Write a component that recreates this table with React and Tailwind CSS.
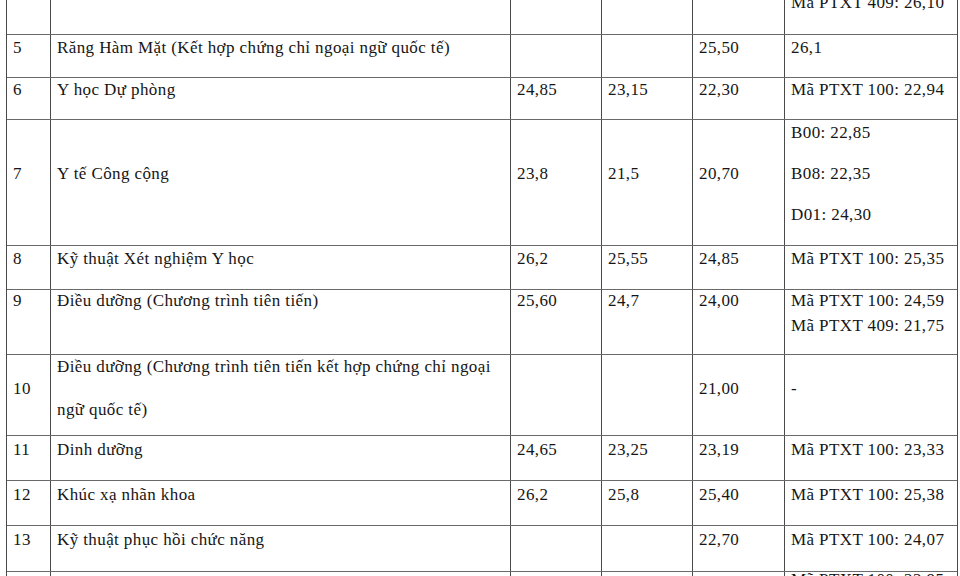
import React from "react";

const COLS = "grid grid-cols-[44px_460px_91px_91px_92px_173px]";

function Cell({ lines = [], last = false, align = "mid", pb = "pb-[17px]", gap = "gap-[16px]" }) {
  const base = `${last ? "" : "border-r"} border-[#4a4a4a] pl-[6px] overflow-hidden`;
  if (align === "top") {
    return (
      <div className={`${base} flex flex-col`}>
        <div className="-mt-[2px] flex flex-col">
          {lines.map((l, i) => (
            <div key={i} className="leading-[25px] whitespace-nowrap">{l}</div>
          ))}
        </div>
      </div>
    );
  }
  if (align === "crop-top") {
    return (
      <div className={`${base} flex flex-col`}>
        <div className="-mt-[10px] flex flex-col">
          {lines.map((l, i) => (
            <div key={i} className="leading-[26px] whitespace-nowrap">{l}</div>
          ))}
        </div>
      </div>
    );
  }
  if (align === "crop-bottom") {
    return (
      <div className={`${base} flex flex-col`}>
        <div className="-mt-[5px] flex flex-col">
          {lines.map((l, i) => (
            <div key={i} className="leading-[26px] whitespace-nowrap">{l}</div>
          ))}
        </div>
      </div>
    );
  }
  return (
    <div className={`${base} flex flex-col justify-center ${pb}`}>
      <div className={`flex flex-col ${gap}`}>
        {lines.map((l, i) => (
          <div key={i} className="leading-[26px] whitespace-nowrap">{l}</div>
        ))}
      </div>
    </div>
  );
}

function Row({ h, cells, align = "mid", pb, gap, noBorder = false }) {
  return (
    <div className={`${COLS} ${h} ${noBorder ? "" : "border-b"} border-[#6a6a6a]`}>
      {cells.map((c, i) => (
        <Cell
          key={i}
          lines={Array.isArray(c) ? c : c === "" ? [] : [c]}
          last={i === cells.length - 1}
          align={align}
          pb={pb}
          gap={gap}
        />
      ))}
    </div>
  );
}

export default function App() {
  return (
    <div
      className="w-[960px] h-[576px] overflow-hidden bg-white text-[#161616] text-[17px] tracking-[0.4px]"
      style={{ fontFamily: '"Liberation Serif", "Times New Roman", serif' }}
    >
      <div className="ml-[6px] w-[952px] border-l border-r border-[#4a4a4a]">
        <Row h="h-[35px]" align="crop-top" cells={["", "", "", "", "", "Mã PTXT 409: 26,10"]} />
        <Row
          h="h-[43px]"
          cells={["5", "Răng Hàm Mặt (Kết hợp chứng chỉ ngoại ngữ quốc tế)", "", "", "25,50", "26,1"]}
        />
        <Row h="h-[42px]" cells={["6", "Y học Dự phòng", "24,85", "23,15", "22,30", "Mã PTXT 100: 22,94"]} />
        <Row
          h="h-[126px]"
          gap="gap-[15px]"
          cells={["7", "Y tế Công cộng", "23,8", "21,5", "20,70", ["B00: 22,85", "B08: 22,35", "D01: 24,30"]]}
        />
        <Row
          h="h-[44px]"
          cells={["8", "Kỹ thuật Xét nghiệm Y học", "26,2", "25,55", "24,85", "Mã PTXT 100: 25,35"]}
        />
        <Row
          h="h-[65px]"
          align="top"
          cells={[
            "9",
            "Điều dưỡng (Chương trình tiên tiến)",
            "25,60",
            "24,7",
            "24,00",
            ["Mã PTXT 100: 24,59", "Mã PTXT 409: 21,75"],
          ]}
        />
        <Row
          h="h-[81px]"
          pb="pb-[13px]"
          gap="gap-[17px]"
          cells={[
            "10",
            ["Điều dưỡng (Chương trình tiên tiến kết hợp chứng chỉ ngoại", "ngữ quốc tế)"],
            "",
            "",
            "21,00",
            "-",
          ]}
        />
        <Row h="h-[45px]" cells={["11", "Dinh dưỡng", "24,65", "23,25", "23,19", "Mã PTXT 100: 23,33"]} />
        <Row h="h-[45px]" cells={["12", "Khúc xạ nhãn khoa", "26,2", "25,8", "25,40", "Mã PTXT 100: 25,38"]} />
        <Row
          h="h-[46px]"
          cells={["13", "Kỹ thuật phục hồi chức năng", "", "", "22,70", "Mã PTXT 100: 24,07"]}
        />
        <Row
          h="h-[40px]"
          align="crop-bottom"
          noBorder
          cells={["", "", "", "", "", "Mã PTXT 100: 22,95"]}
        />
      </div>
    </div>
  );
}
